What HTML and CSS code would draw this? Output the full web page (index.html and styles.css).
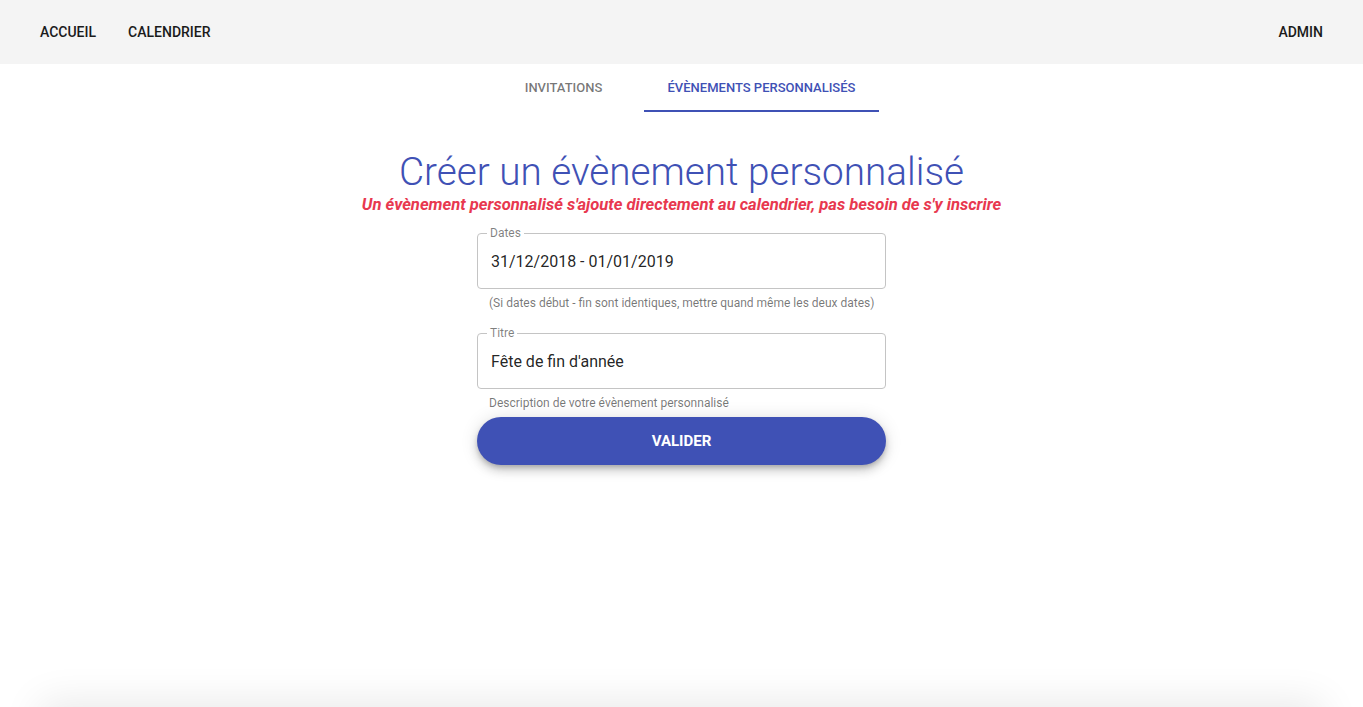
FILE: index.html
```html
<!DOCTYPE html>
<html lang="fr">
<head>
<meta charset="utf-8">
<title>Évènements personnalisés</title>
<link rel="stylesheet" href="styles.css">
</head>
<body>
<div class="app">
  <header class="topbar">
    <nav class="nav-left">
      <a class="nav-link" href="#">ACCUEIL</a>
      <a class="nav-link" href="#">CALENDRIER</a>
    </nav>
    <a class="nav-link" href="#">ADMIN</a>
  </header>

  <div class="tabs">
    <div class="tab">INVITATIONS</div>
    <div class="tab tab-active">ÉVÈNEMENTS PERSONNALISÉS</div>
  </div>

  <main class="content">
    <h1 class="title">Créer un évènement personnalisé</h1>
    <p class="subtitle">Un évènement personnalisé s'ajoute directement au calendrier, pas besoin de s'y inscrire</p>

    <form class="form">
      <div class="field">
        <fieldset class="outline">
          <legend class="legend">Dates</legend>
          <div class="value">31/12/2018 - 01/01/2019</div>
        </fieldset>
        <p class="helper">(Si dates début - fin sont identiques, mettre quand même les deux dates)</p>
      </div>
      <div class="field">
        <fieldset class="outline">
          <legend class="legend">Titre</legend>
          <div class="value">Fête de fin d'année</div>
        </fieldset>
        <p class="helper">Description de votre évènement personnalisé</p>
      </div>
      <button class="submit" type="button">VALIDER</button>
    </form>
  </main>
  <div class="bottom-card"></div>
</div>
</body>
</html>
```

FILE: styles.css
```css
* { box-sizing: border-box; }
html, body {
  margin: 0;
  padding: 0;
  height: 100%;
  overflow: hidden;
  background: #fff;
  font-family: Roboto, "Liberation Sans", Arial, sans-serif;
}
.app {
  position: relative;
  height: 707px;
  overflow: hidden;
  display: flex;
  flex-direction: column;
}
.topbar {
  height: 64px;
  background: #f4f4f4;
  display: flex;
  align-items: center;
  justify-content: space-between;
  padding: 0 40px;
}
.nav-left {
  display: flex;
  gap: 32px;
}
.nav-link {
  color: #1b1b1b;
  text-decoration: none;
  font-size: 14px;
  font-weight: 500;
}
.tabs {
  display: flex;
  justify-content: center;
  height: 48px;
}
.tab {
  min-width: 160px;
  padding: 0 24px;
  display: flex;
  align-items: center;
  justify-content: center;
  font-size: 13px;
  font-weight: 500;
  color: rgba(0,0,0,0.54);
  border-bottom: 2px solid transparent;
}
.tab-active {
  color: #3f51b5;
  border-bottom-color: #3f51b5;
}
.content {
  display: flex;
  flex-direction: column;
  align-items: center;
}
.title {
  margin: 36px 0 0;
  font-size: 38.7px;
  line-height: 48px;
  font-weight: 300;
  color: #3f51b5;
}
.subtitle {
  margin: -1px 0 0;
  font-size: 16.6px;
  line-height: 20px;
  font-style: italic;
  font-weight: 700;
  color: #e8384f;
}
.form {
  width: 409px;
  margin-top: 18px;
  display: flex;
  flex-direction: column;
}
.field {
  display: flex;
  flex-direction: column;
  margin-bottom: 7px;
}
.field + .field { margin-top: 16px; }
.outline {
  margin: 0;
  padding: 0 13px;
  border: 1px solid #c4c4c4;
  border-radius: 4px;
  position: relative;
  top: -6px;
  margin-bottom: -6px;
  height: 62px;
}
.legend {
  padding: 0 3px;
  margin-left: -4px;
  font-size: 12px;
  line-height: 12px;
  color: rgba(0,0,0,0.5);
}
.value {
  margin-top: 13px;
  font-size: 16px;
  line-height: 20px;
  color: rgba(0,0,0,0.87);
}
.helper {
  margin: 7px 0 0 12px;
  font-size: 12px;
  line-height: 14px;
  color: rgba(0,0,0,0.54);
}
.submit {
  height: 48px;
  border: none;
  border-radius: 24px;
  background: #3f51b5;
  color: #fff;
  font-family: inherit;
  font-size: 15px;
  font-weight: 700;
  box-shadow: 0 3px 5px -1px rgba(0,0,0,0.2), 0 6px 10px 0 rgba(0,0,0,0.14), 0 1px 18px 0 rgba(0,0,0,0.12);
}
.bottom-card {
  position: absolute;
  left: 50px;
  right: 50px;
  top: 712px;
  height: 100px;
  background: #fff;
  box-shadow: 0 0 40px 10px rgba(0,0,0,0.09);
}
```
